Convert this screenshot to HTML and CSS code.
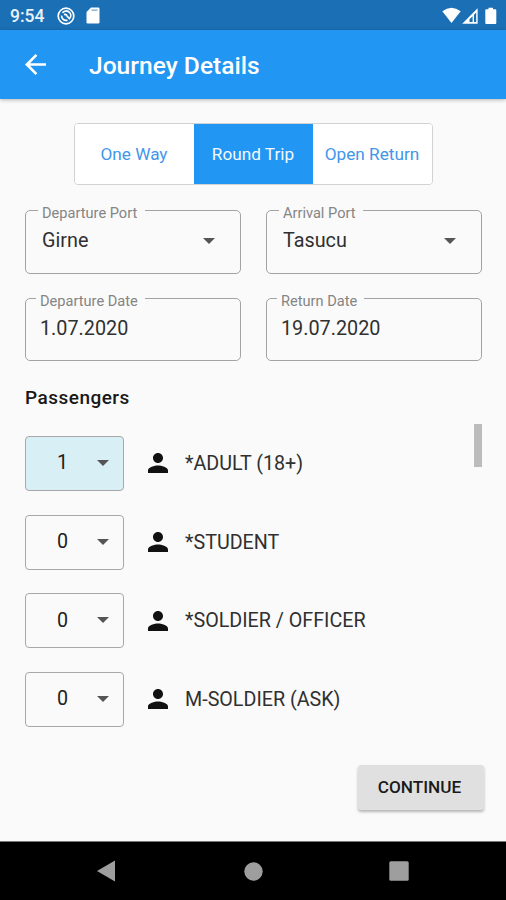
FILE: index.html
```html
<!DOCTYPE html>
<html lang="en">
<head>
<meta charset="utf-8">
<title>Journey Details</title>
<link rel="stylesheet" href="styles.css">
</head>
<body>
<div class="screen">
  <div class="status">
    <span class="clock">9:54</span>
    <svg class="dnd" width="18" height="18" viewBox="0 0 18 18" fill="none" stroke="#fff"><circle cx="9" cy="9" r="7.8" stroke-width="1.7"/><path d="M5.500 5.800A4.600 4.600 0 0 1 13.200 10.800M4.600 8.600a4.500 4.500 0 0 0 5.900 4.600M7 7.600q2.300-.6 3 1.400L13 12.300" stroke-width="1.7"/></svg>
    <svg class="sd" width="14" height="17" viewBox="0 0 14 17"><path d="M5 .5h7.200q1.300 0 1.300 1.300v13.400q0 1.300-1.300 1.300H1.800Q.5 16.500.5 15.200V5z" fill="#fff"/><path d="M5.500 3.200h6" stroke="#8fb9db" stroke-width="1.600"/></svg>
    <svg class="signals" width="56" height="18" viewBox="0 0 56 18"><path d="M.3 4.300Q9.500-2.800 18.700 4.300L9.500 16z" fill="#fff"/><path d="M35.600 1.200V16.700H20.200z" fill="#fff"/><path d="M34.200 5.500v9.500H32V7.700zM30.600 9.200V15H27.500v-2.700z" fill="#1b6fb5"/><path d="M46.500.7h4.500v1.500h2.300q1 0 1 1v12.700q0 1-1 1h-9q-1 0-1-1V3.200q0-1 1-1h2.200z" fill="#fff"/></svg>
  </div>
  <header class="appbar">
    <svg width="21" height="21" viewBox="4 4 16 16"><path d="M20 11H7.830l5.590-5.590L12 4l-8 8 8 8 1.410-1.410L7.830 13H20v-2z" fill="#fff"/></svg>
    <h1>Journey Details</h1>
  </header>
  <main>
    <div class="tabs">
      <button class="tab"><span>One Way</span></button>
      <button class="tab on"><span>Round Trip</span></button>
      <button class="tab"><span>Open Return</span></button>
    </div>
    <div class="fields">
      <fieldset class="select"><legend class="l-dp">Departure Port</legend><span>Girne</span><i class="caret"></i></fieldset>
      <fieldset class="select"><legend class="l-ap">Arrival Port</legend><span>Tasucu</span><i class="caret"></i></fieldset>
      <fieldset class="date"><legend class="l-dd">Departure Date</legend><span>1.07.2020</span></fieldset>
      <fieldset class="date"><legend class="l-rd">Return Date</legend><span>19.07.2020</span></fieldset>
    </div>
    <h2>Passengers</h2>
    <section class="list">
      <div class="rows">
        <div class="row"><div class="count active"><span>1</span><i class="caret"></i></div><svg class="person" viewBox="4 4 16 16"><path d="M12 12c2.210 0 4-1.790 4-4s-1.790-4-4-4-4 1.790-4 4 1.790 4 4 4zm0 2c-2.670 0-8 1.340-8 4v2h16v-2c0-2.660-5.330-4-8-4z"/></svg><span class="name">*ADULT (18+)</span></div>
        <div class="row"><div class="count"><span>0</span><i class="caret"></i></div><svg class="person" viewBox="4 4 16 16"><path d="M12 12c2.210 0 4-1.790 4-4s-1.790-4-4-4-4 1.790-4 4 1.790 4 4 4zm0 2c-2.670 0-8 1.340-8 4v2h16v-2c0-2.660-5.330-4-8-4z"/></svg><span class="name">*STUDENT</span></div>
        <div class="row"><div class="count"><span>0</span><i class="caret"></i></div><svg class="person" viewBox="4 4 16 16"><path d="M12 12c2.210 0 4-1.790 4-4s-1.790-4-4-4-4 1.790-4 4 1.790 4 4 4zm0 2c-2.670 0-8 1.340-8 4v2h16v-2c0-2.660-5.330-4-8-4z"/></svg><span class="name">*SOLDIER / OFFICER</span></div>
        <div class="row"><div class="count"><span>0</span><i class="caret"></i></div><svg class="person" viewBox="4 4 16 16"><path d="M12 12c2.210 0 4-1.790 4-4s-1.790-4-4-4-4 1.790-4 4 1.790 4 4 4zm0 2c-2.670 0-8 1.340-8 4v2h16v-2c0-2.660-5.330-4-8-4z"/></svg><span class="name">M-SOLDIER (ASK)</span></div>
      </div>
      <div class="thumb"></div>
    </section>
    <div class="actions"><button class="continue">CONTINUE</button></div>
  </main>
  <nav class="navbar">
    <svg width="18" height="22" viewBox="0 0 18 22"><path d="M0 11L18 .500v21z" fill="#9e9e9e"/></svg>
    <svg class="home" width="19" height="19" viewBox="0 0 19 19"><circle cx="9.500" cy="9.500" r="9.200" fill="#9e9e9e"/></svg>
    <svg width="20" height="20" viewBox="0 0 20 20"><rect x=".3" y=".3" width="19.400" height="19.400" rx="1.500" fill="#9e9e9e"/></svg>
  </nav>
</div>
</body>
</html>
```
FILE: styles.css
```css
* { box-sizing: border-box; }
body { margin: 0; font-family: Roboto, "Liberation Sans", sans-serif; color: #212121; }
button { font-family: inherit; border: 0; padding: 0; margin: 0; }
.screen { width: 506px; height: 900px; display: flex; flex-direction: column; background: #fafafa; overflow: hidden; }
.status { height: 30px; flex: none; background: #1b6fb5; display: flex; align-items: center; padding: 1px 8px 0 10px; color: #fff; }
.clock { font-size: 17.5px; font-weight: 500; width: 47px; color: #e8f1f8; white-space: nowrap; }
.sd { margin-left: 11px; }
.signals { margin-left: auto; }
.appbar { height: 69px; flex: none; background: #2196f3; display: flex; align-items: center; padding: 0 25px; box-shadow: 0 1px 4px rgba(0,0,0,.28); }
.appbar h1 { margin: 1px 0 0 43px; color: #fff; font-size: 24.6px; font-weight: 500; white-space: nowrap; }
main { flex: 1; padding: 24px 24px 0 25px; }
.tabs { display: flex; width: 359px; height: 62px; margin: 0 auto 0 49px; border: 1.5px solid #d2d2d2; border-radius: 4px; background: #fff; overflow: hidden; }
.tab { flex: 1; background: #fff; color: #4296ea; font-size: 17.2px; white-space: nowrap; }
.tab.on { background: #2196f3; color: #f4f9fe; }
.tab span { display: block; margin: 0 1px 1px 0; }
.fields { display: grid; grid-template-columns: 216px 216px; column-gap: 25px; margin-top: 16px; }
fieldset { margin: 0; min-width: 0; height: 73px; border: 1px solid #a3a3a3; border-radius: 5px; padding: 0 25px 0 16px; display: flex; align-items: flex-start; color: #303030; font-size: 19.8px; line-height: 24px; }
fieldset.date { margin-top: 15px; padding-left: 14px; height: 72px; }
legend { height: 18px; margin-left: -4px; padding: 3px 0 0 4px; font-size: 14.6px; line-height: 18px; color: #858585; white-space: nowrap; }
.select .caret { margin: 19px 0 0 auto; }
.select span, .date span { margin-top: 10px; }
.l-dp { width: 107px; }
.l-ap { width: 84px; }
.l-dd { width: 109px; }
.l-rd { width: 87px; }
.caret { width: 0; height: 0; border: 6px solid transparent; border-top-color: #555; border-bottom: 0; }
h2 { margin: 25px 0 0; font-size: 19px; line-height: 24px; font-weight: 500; letter-spacing: .48px; color: #181818; }
.list { display: flex; justify-content: space-between; margin-top: 14px; }
.rows { display: flex; flex-direction: column; gap: 24px; padding-top: 12px; }
.row { display: flex; align-items: center; height: 54.7px; }
.count { width: 99px; height: 55px; border: 1px solid #a8a8a8; border-radius: 4px; display: flex; align-items: center; padding: 0 14px 1px 31px; justify-content: space-between; font-size: 19.7px; }
.count.active { background: #d9eff6; }
.person { width: 20px; height: 20px; margin-left: 24px; fill: #111; }
.name { margin-left: 17px; font-size: 19.7px; color: #303030; white-space: nowrap; }
.thumb { width: 8px; height: 43px; background: #bcbcbc; }
.actions { display: flex; justify-content: flex-end; margin: 38px -2px 0 0; }
.continue { width: 126px; height: 45px; background: #e0e0e0; border-radius: 3px; padding-right: 3px; font-size: 17.2px; font-weight: 500; color: #1b1b1b; box-shadow: 0 2px 3px rgba(0,0,0,.28); }
.navbar { height: 59px; flex: none; background: #000; border-top: 1px solid #777; display: flex; justify-content: space-between; align-items: center; padding: 0 97px; }
.home { margin-left: 2px; }
```
